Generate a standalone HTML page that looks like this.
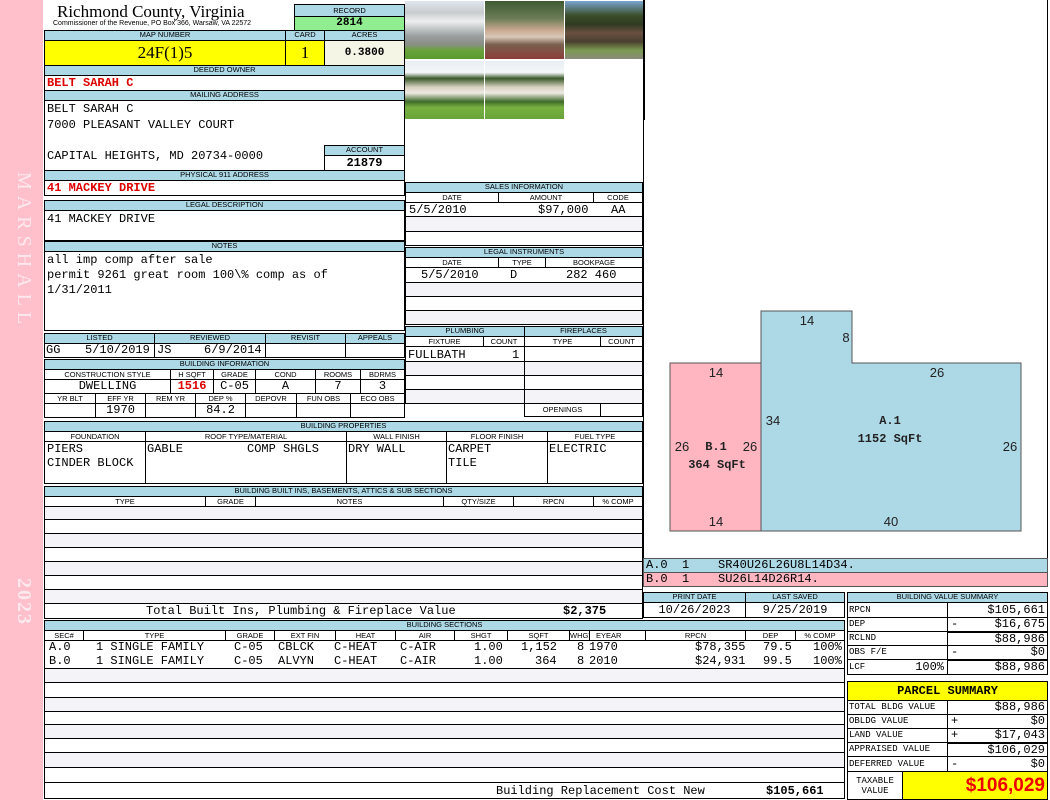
<!DOCTYPE html>
<html><head><meta charset="utf-8"><style>
body{margin:0;width:1050px;height:800px;background:#fff;position:relative;overflow:hidden;font-family:"Liberation Sans",sans-serif}
.a{position:absolute;box-sizing:border-box}
.h{position:absolute;box-sizing:border-box;background:#add8e6;border:1px solid #000;font:7.5px "Liberation Sans",sans-serif;text-align:center;line-height:8px;color:#000;white-space:nowrap;overflow:hidden}
.c{position:absolute;box-sizing:border-box;border:1px solid #000;font:7.5px "Liberation Sans",sans-serif;text-align:center;line-height:9px;white-space:nowrap;overflow:hidden;background:#fff}
.m{font-family:"Liberation Mono",monospace;font-size:12px;white-space:pre;line-height:14px}
.r{position:absolute;box-sizing:border-box;border:1px solid #000;}
.r span{position:absolute;top:0}
.g{background:#f3f3f8}
.red{color:#d00;font-weight:bold}
.ph{position:absolute;overflow:hidden}
</style></head><body>
<div class="a" style="left:0;top:0;width:43px;height:800px;background:#ffc0cb"></div>
<div class="a" style="left:9px;top:172px;width:26px;height:165px;"><div style="transform:rotate(90deg);transform-origin:0 0;position:absolute;left:26px;top:0;width:170px;font:20px 'Liberation Serif',serif;color:#fde8ee;letter-spacing:6px;white-space:nowrap">MARSHALL</div></div>
<div class="a" style="left:9px;top:578px;width:26px;height:50px;"><div style="transform:rotate(90deg);transform-origin:0 0;position:absolute;left:26px;top:0;width:60px;font:bold 20px 'Liberation Serif',serif;color:#fde8ee;letter-spacing:2px">2023</div></div>

<div class="a" style="left:57px;top:2px;font:17px 'Liberation Serif',serif;line-height:20px">Richmond County, Virginia</div>
<div class="a" style="left:53px;top:20px;font:7px 'Liberation Sans',sans-serif;white-space:nowrap">Commissioner of the Revenue, PO Box 366, Warsaw, VA 22572</div>
<div class="h" style="left:294px;top:4px;width:111px;height:13px;line-height:11px">RECORD</div>
<div class="c m" style="left:294px;top:16px;width:111px;height:15px;background:#90ee90;font-weight:bold;line-height:13px;font-size:11px">2814</div>

<div class="h" style="left:44px;top:30px;width:242px;height:11px">MAP NUMBER</div>
<div class="h" style="left:285px;top:30px;width:40px;height:11px">CARD</div>
<div class="h" style="left:324px;top:30px;width:81px;height:11px">ACRES</div>
<div class="c" style="left:44px;top:40px;width:242px;height:26px;background:#ffff00;font:17px 'Liberation Serif',serif;line-height:24px">24F(1)5</div>
<div class="c" style="left:285px;top:40px;width:40px;height:26px;background:#ffff00;font:17px 'Liberation Serif',serif;line-height:24px">1</div>
<div class="c m" style="left:324px;top:40px;width:81px;height:26px;background:#f5f5e6;font-weight:bold;line-height:24px;font-size:11px">0.3800</div>

<div class="h" style="left:44px;top:65px;width:361px;height:11px">DEEDED OWNER</div>
<div class="r m red" style="left:44px;top:75px;width:361px;height:16px;padding-left:2px;line-height:15px">BELT SARAH C</div>
<div class="h" style="left:44px;top:90px;width:361px;height:11px">MAILING ADDRESS</div>
<div class="r m" style="left:44px;top:100px;width:361px;height:71px;padding:1px 0 0 2px;line-height:15.5px">BELT SARAH C
7000 PLEASANT VALLEY COURT

CAPITAL HEIGHTS, MD 20734-0000</div>
<div class="h" style="left:324px;top:145px;width:81px;height:11px">ACCOUNT</div>
<div class="c m" style="left:324px;top:155px;width:81px;height:16px;font-weight:bold;line-height:14px">21879</div>
<div class="h" style="left:44px;top:170px;width:361px;height:11px">PHYSICAL 911 ADDRESS</div>
<div class="r m red" style="left:44px;top:180px;width:361px;height:16px;padding-left:2px;line-height:15px">41 MACKEY DRIVE</div>

<div class="h" style="left:44px;top:200px;width:361px;height:11px">LEGAL DESCRIPTION</div>
<div class="r m" style="left:44px;top:210px;width:361px;height:31px;padding:1px 0 0 2px">41 MACKEY DRIVE</div>
<div class="h" style="left:44px;top:241px;width:361px;height:11px">NOTES</div>
<div class="r m" style="left:44px;top:251px;width:361px;height:80px;padding:1px 0 0 2px;line-height:15px">all imp comp after sale
permit 9261 great room 100\% comp as of
1/31/2011</div>

<div class="h" style="left:44px;top:333px;width:111px;height:11px">LISTED</div>
<div class="h" style="left:154px;top:333px;width:112px;height:11px">REVIEWED</div>
<div class="h" style="left:265px;top:333px;width:81px;height:11px">REVISIT</div>
<div class="h" style="left:345px;top:333px;width:60px;height:11px">APPEALS</div>
<div class="r m" style="left:44px;top:343px;width:111px;height:15px;line-height:13px"><span style="left:1px">GG</span><span style="left:40px">5/10/2019</span></div>
<div class="r m" style="left:154px;top:343px;width:112px;height:15px;line-height:13px"><span style="left:2px">JS</span><span style="left:49px">6/9/2014</span></div>
<div class="r" style="left:265px;top:343px;width:81px;height:15px"></div>
<div class="r" style="left:345px;top:343px;width:60px;height:15px"></div>

<div class="h" style="left:44px;top:359px;width:361px;height:11px">BUILDING INFORMATION</div>
<div class="c" style="left:44px;top:369px;width:127px;height:11px">CONSTRUCTION STYLE</div>
<div class="c" style="left:170px;top:369px;width:44px;height:11px">H SQFT</div>
<div class="c" style="left:213px;top:369px;width:43px;height:11px">GRADE</div>
<div class="c" style="left:255px;top:369px;width:61px;height:11px">COND</div>
<div class="c" style="left:315px;top:369px;width:46px;height:11px">ROOMS</div>
<div class="c" style="left:360px;top:369px;width:45px;height:11px">BDRMS</div>
<div class="c m" style="left:44px;top:379px;width:127px;height:15px;line-height:13px">DWELLING</div>
<div class="c m red" style="left:170px;top:379px;width:44px;height:15px;line-height:13px">1516</div>
<div class="c m" style="left:213px;top:379px;width:43px;height:15px;line-height:13px">C-05</div>
<div class="c m" style="left:255px;top:379px;width:61px;height:15px;line-height:13px">A</div>
<div class="c m" style="left:315px;top:379px;width:46px;height:15px;line-height:13px">7</div>
<div class="c m" style="left:360px;top:379px;width:45px;height:15px;line-height:13px">3</div>
<div class="c" style="left:44px;top:393px;width:52px;height:11px">YR BLT</div>
<div class="c" style="left:95px;top:393px;width:51px;height:11px">EFF YR</div>
<div class="c" style="left:145px;top:393px;width:51px;height:11px">REM YR</div>
<div class="c" style="left:195px;top:393px;width:51px;height:11px">DEP %</div>
<div class="c" style="left:245px;top:393px;width:52px;height:11px">DEPOVR</div>
<div class="c" style="left:296px;top:393px;width:55px;height:11px">FUN OBS</div>
<div class="c" style="left:350px;top:393px;width:55px;height:11px">ECO OBS</div>
<div class="c" style="left:44px;top:403px;width:52px;height:15px"></div>
<div class="c m" style="left:95px;top:403px;width:51px;height:15px;line-height:13px">1970</div>
<div class="c" style="left:145px;top:403px;width:51px;height:15px"></div>
<div class="c m" style="left:195px;top:403px;width:51px;height:15px;line-height:13px">84.2</div>
<div class="c" style="left:245px;top:403px;width:52px;height:15px"></div>
<div class="c" style="left:296px;top:403px;width:55px;height:15px"></div>
<div class="c" style="left:350px;top:403px;width:55px;height:15px"></div>

<div class="h" style="left:44px;top:421px;width:599px;height:11px">BUILDING PROPERTIES</div>
<div class="c" style="left:44px;top:431px;width:102px;height:11px">FOUNDATION</div>
<div class="c" style="left:145px;top:431px;width:202px;height:11px">ROOF TYPE/MATERIAL</div>
<div class="c" style="left:346px;top:431px;width:101px;height:11px">WALL FINISH</div>
<div class="c" style="left:446px;top:431px;width:102px;height:11px">FLOOR FINISH</div>
<div class="c" style="left:547px;top:431px;width:96px;height:11px">FUEL TYPE</div>
<div class="r m" style="left:44px;top:441px;width:102px;height:43px;padding-left:2px">PIERS
CINDER BLOCK</div>
<div class="r m" style="left:145px;top:441px;width:202px;height:43px"><span style="left:1px">GABLE</span><span style="left:101px">COMP SHGLS</span></div>
<div class="r m" style="left:346px;top:441px;width:101px;height:43px;padding-left:1px">DRY WALL</div>
<div class="r m" style="left:446px;top:441px;width:102px;height:43px;padding-left:1px">CARPET
TILE</div>
<div class="r m" style="left:547px;top:441px;width:96px;height:43px;padding-left:1px">ELECTRIC</div>

<div class="h" style="left:44px;top:486px;width:599px;height:11px">BUILDING BUILT INS, BASEMENTS, ATTICS &amp; SUB SECTIONS</div>
<div class="c" style="left:44px;top:496px;width:162px;height:11px">TYPE</div>
<div class="c" style="left:205px;top:496px;width:51px;height:11px">GRADE</div>
<div class="c" style="left:255px;top:496px;width:189px;height:11px">NOTES</div>
<div class="c" style="left:443px;top:496px;width:71px;height:11px">QTY/SIZE</div>
<div class="c" style="left:513px;top:496px;width:81px;height:11px">RPCN</div>
<div class="c" style="left:593px;top:496px;width:50px;height:11px">% COMP</div>
<div class="r g" style="left:44px;top:506px;width:599px;height:14px"></div>
<div class="r" style="left:44px;top:519px;width:599px;height:15px"></div>
<div class="r g" style="left:44px;top:533px;width:599px;height:15px"></div>
<div class="r" style="left:44px;top:547px;width:599px;height:15px"></div>
<div class="r g" style="left:44px;top:561px;width:599px;height:15px"></div>
<div class="r" style="left:44px;top:575px;width:599px;height:15px"></div>
<div class="r g" style="left:44px;top:589px;width:599px;height:15px"></div>
<div class="r m" style="left:44px;top:603px;width:599px;height:16px;line-height:15px"><span style="left:101px">Total Built Ins, Plumbing &amp; Fireplace Value</span><span style="left:518px;font-weight:bold">$2,375</span></div>

<div class="h" style="left:44px;top:620px;width:801px;height:11px">BUILDING SECTIONS</div>
<div class="c" style="left:44px;top:630px;width:40px;height:11px">SEC#</div>
<div class="c" style="left:83px;top:630px;width:143px;height:11px">TYPE</div>
<div class="c" style="left:225px;top:630px;width:50px;height:11px">GRADE</div>
<div class="c" style="left:274px;top:630px;width:62px;height:11px">EXT FIN</div>
<div class="c" style="left:335px;top:630px;width:61px;height:11px">HEAT</div>
<div class="c" style="left:395px;top:630px;width:60px;height:11px">AIR</div>
<div class="c" style="left:454px;top:630px;width:54px;height:11px">SHGT</div>
<div class="c" style="left:507px;top:630px;width:63px;height:11px">SQFT</div>
<div class="c" style="left:569px;top:630px;width:21px;height:11px">WHGT</div>
<div class="c" style="left:589px;top:630px;width:57px;height:11px;text-align:left;padding-left:6px">EYEAR</div>
<div class="c" style="left:645px;top:630px;width:101px;height:11px">RPCN</div>
<div class="c" style="left:745px;top:630px;width:51px;height:11px">DEP</div>
<div class="c" style="left:795px;top:630px;width:50px;height:11px">% COMP</div>
<div class="r m" style="left:44px;top:640px;width:801px;height:15px;line-height:15px;border-width:0 1px"><span style="left:4px">A.0</span><span style="left:51px">1 SINGLE FAMILY</span><span style="left:189px">C-05</span><span style="left:233px">CBLCK</span><span style="left:289px">C-HEAT</span><span style="left:355px">C-AIR</span><span style="left:429px">1.00</span><span style="left:476px">1,152</span><span style="left:532px">8</span><span style="left:544px">1970</span><span style="left:650px">$78,355</span><span style="left:718px">79.5</span><span style="left:768px">100%</span></div>
<div class="r m" style="left:44px;top:654px;width:801px;height:15px;line-height:15px;border-width:0 1px"><span style="left:4px">B.0</span><span style="left:51px">1 SINGLE FAMILY</span><span style="left:189px">C-05</span><span style="left:233px">ALVYN</span><span style="left:289px">C-HEAT</span><span style="left:355px">C-AIR</span><span style="left:429px">1.00</span><span style="left:490px">364</span><span style="left:532px">8</span><span style="left:544px">2010</span><span style="left:650px">$24,931</span><span style="left:718px">99.5</span><span style="left:768px">100%</span></div>
<div class="r g" style="left:44px;top:668px;width:801px;height:15px"></div>
<div class="r" style="left:44px;top:682px;width:801px;height:16px"></div>
<div class="r g" style="left:44px;top:697px;width:801px;height:15px"></div>
<div class="r" style="left:44px;top:711px;width:801px;height:14px"></div>
<div class="r g" style="left:44px;top:724px;width:801px;height:15px"></div>
<div class="r" style="left:44px;top:738px;width:801px;height:15px"></div>
<div class="r g" style="left:44px;top:752px;width:801px;height:16px"></div>
<div class="r" style="left:44px;top:767px;width:801px;height:16px"></div>
<div class="r m" style="left:44px;top:782px;width:801px;height:17px;line-height:17px"><span style="left:451px">Building Replacement Cost New</span><span style="left:721px;font-weight:bold">$105,661</span></div>

<div class="ph" style="left:405px;top:1px;width:79px;height:58px;background:linear-gradient(#dfe6ee 0%,#c9ccce 20%,#eef0f0 35%,#9aa0a0 60%,#8a8e86 75%,#69a33a 85%,#5b9a2f 100%)"></div>
<div class="ph" style="left:485px;top:1px;width:79px;height:58px;background:linear-gradient(#3f5a32 0%,#6b7d58 30%,#c9a88e 50%,#d8c8b8 62%,#7a6050 75%,#8c3e3a 100%)"></div>
<div class="ph" style="left:565px;top:1px;width:79px;height:58px;background:linear-gradient(#7aa6cf 0%,#3b4d2a 25%,#2f3a22 40%,#6a5040 55%,#4a4030 70%,#7a9a50 85%,#8a8a7a 100%)"></div>
<div class="ph" style="left:405px;top:61px;width:79px;height:58px;background:linear-gradient(#e8eef4 0%,#f4f6f8 20%,#3a5a2a 30%,#d6d0c0 45%,#eeeae2 55%,#3f6a2a 70%,#78b040 80%,#6aa53a 100%)"></div>
<div class="ph" style="left:485px;top:61px;width:79px;height:58px;background:linear-gradient(#e8eef4 0%,#f4f6f8 20%,#3a5a2a 30%,#d6d0c0 45%,#eeeae2 55%,#3f6a2a 70%,#78b040 80%,#6aa53a 100%)"></div>
<div class="a" style="left:644px;top:0;width:1px;height:120px;background:#000"></div>

<div class="h" style="left:405px;top:182px;width:238px;height:11px">SALES INFORMATION</div>
<div class="c" style="left:405px;top:192px;width:94px;height:11px">DATE</div>
<div class="c" style="left:498px;top:192px;width:96px;height:11px">AMOUNT</div>
<div class="c" style="left:593px;top:192px;width:50px;height:11px">CODE</div>
<div class="r m" style="left:405px;top:202px;width:238px;height:15px;line-height:16px;border-width:0 1px"><span style="left:3px">5/5/2010</span><span style="left:132px">$97,000</span><span style="left:205px">AA</span></div>
<div class="r g" style="left:405px;top:216px;width:238px;height:16px"></div>
<div class="r" style="left:405px;top:231px;width:238px;height:15px"></div>
<div class="h" style="left:405px;top:247px;width:238px;height:11px">LEGAL INSTRUMENTS</div>
<div class="c" style="left:405px;top:257px;width:94px;height:11px">DATE</div>
<div class="c" style="left:498px;top:257px;width:48px;height:11px">TYPE</div>
<div class="c" style="left:545px;top:257px;width:98px;height:11px">BOOKPAGE</div>
<div class="r m" style="left:405px;top:267px;width:238px;height:16px;line-height:17px;border-width:0 1px"><span style="left:15px">5/5/2010</span><span style="left:104px">D</span><span style="left:160px">282 460</span></div>
<div class="r g" style="left:405px;top:282px;width:238px;height:15px"></div>
<div class="r" style="left:405px;top:296px;width:238px;height:15px"></div>
<div class="r g" style="left:405px;top:310px;width:238px;height:15px"></div>

<div class="h" style="left:405px;top:326px;width:120px;height:11px">PLUMBING</div>
<div class="h" style="left:524px;top:326px;width:119px;height:11px">FIREPLACES</div>
<div class="c" style="left:405px;top:336px;width:79px;height:11px">FIXTURE</div>
<div class="c" style="left:483px;top:336px;width:42px;height:11px">COUNT</div>
<div class="c" style="left:524px;top:336px;width:77px;height:11px">TYPE</div>
<div class="c" style="left:600px;top:336px;width:43px;height:11px">COUNT</div>
<div class="r m" style="left:405px;top:346px;width:120px;height:16px;line-height:16px"><span style="left:2px">FULLBATH</span><span style="left:106px">1</span></div>
<div class="r g" style="left:405px;top:361px;width:120px;height:15px"></div>
<div class="r" style="left:405px;top:375px;width:120px;height:15px"></div>
<div class="r g" style="left:405px;top:389px;width:120px;height:15px"></div>
<div class="r" style="left:524px;top:346px;width:119px;height:16px"></div>
<div class="r g" style="left:524px;top:361px;width:119px;height:15px"></div>
<div class="r" style="left:524px;top:375px;width:119px;height:15px"></div>
<div class="r g" style="left:524px;top:389px;width:119px;height:15px"></div>
<div class="c" style="left:524px;top:403px;width:77px;height:14px;line-height:12px">OPENINGS</div>
<div class="c" style="left:600px;top:403px;width:43px;height:14px"></div>

<div class="r" style="left:643px;top:0;width:405px;height:559px;border-width:0 1px 1px 1px"></div>
<svg class="a" style="left:0;top:0" width="1050" height="560">
<rect x="670" y="363" width="91" height="168" fill="#ffb6c1" stroke="#555" stroke-width="1"/>
<polygon points="761,311 852,311 852,363 1021,363 1021,531 761,531" fill="#add8e6" stroke="#555" stroke-width="1"/>
<g font-family="Liberation Sans,sans-serif" font-size="13" fill="#222" text-anchor="middle">
<text x="807" y="325">14</text><text x="846" y="342">8</text><text x="937" y="377">26</text>
<text x="716" y="377">14</text><text x="773" y="425">34</text><text x="682" y="451">26</text>
<text x="750" y="451">26</text><text x="1010" y="451">26</text><text x="716" y="526">14</text><text x="891" y="526">40</text>
</g>
<g font-family="Liberation Mono,monospace" font-size="12" font-weight="bold" fill="#222" text-anchor="middle">
<text x="716" y="450">B.1</text><text x="717" y="468">364 SqFt</text>
<text x="890" y="424">A.1</text><text x="890" y="442">1152 SqFt</text>
</g>
</svg>
<div class="a m" style="left:643px;top:558px;width:405px;height:15px;background:#add8e6;border:1px solid #555;line-height:13px;padding-left:2px">A.0  1    SR40U26L26U8L14D34.</div>
<div class="a m" style="left:643px;top:572px;width:405px;height:15px;background:#ffb6c1;border:1px solid #555;line-height:13px;padding-left:2px">B.0  1    SU26L14D26R14.</div>

<div class="h" style="left:643px;top:592px;width:103px;height:11px">PRINT DATE</div>
<div class="h" style="left:745px;top:592px;width:100px;height:11px">LAST SAVED</div>
<div class="c m" style="left:643px;top:602px;width:103px;height:16px;line-height:14px">10/26/2023</div>
<div class="c m" style="left:745px;top:602px;width:100px;height:16px;line-height:14px">9/25/2019</div>

<div class="h" style="left:847px;top:592px;width:201px;height:11px">BUILDING VALUE SUMMARY</div>
<div class="r m" style="left:847px;top:602px;width:101px;height:16px;font-size:9px;line-height:14px;padding-left:1px">RPCN</div>
<div class="r m" style="left:947px;top:602px;width:101px;height:16px;text-align:right;padding-right:2px;line-height:14px">$105,661</div>
<div class="r m" style="left:847px;top:617px;width:101px;height:15px;font-size:9px;line-height:13px;padding-left:1px">DEP</div>
<div class="r m" style="left:947px;top:617px;width:101px;height:15px;text-align:right;padding-right:2px;line-height:13px"><span style="left:3px">-</span>$16,675</div>
<div class="r m" style="left:847px;top:631px;width:101px;height:15px;font-size:9px;line-height:13px;padding-left:1px">RCLND</div>
<div class="r m" style="left:947px;top:631px;width:101px;height:15px;text-align:right;padding-right:2px;line-height:12px;border-top-width:2px">$88,986</div>
<div class="r m" style="left:847px;top:645px;width:101px;height:15px;font-size:9px;line-height:13px;padding-left:1px">OBS F/E</div>
<div class="r m" style="left:947px;top:645px;width:101px;height:15px;text-align:right;padding-right:2px;line-height:13px"><span style="left:3px">-</span>$0</div>
<div class="r m" style="left:847px;top:659px;width:101px;height:16px;font-size:9px;line-height:14px;padding-left:1px">LCF<span style="right:3px;left:auto;font-size:12px">100%</span></div>
<div class="r m" style="left:947px;top:659px;width:101px;height:16px;text-align:right;padding-right:2px;line-height:13px;border-top-width:2px">$88,986</div>

<div class="r" style="left:847px;top:681px;width:201px;height:20px;background:#ffff00;font:bold 12px 'Liberation Mono',monospace;text-align:center;line-height:18px">PARCEL SUMMARY</div>
<div class="r m" style="left:847px;top:700px;width:101px;height:15px;font-size:9px;line-height:13px;padding-left:1px">TOTAL BLDG VALUE</div>
<div class="r m" style="left:947px;top:700px;width:101px;height:15px;text-align:right;padding-right:2px;line-height:13px">$88,986</div>
<div class="r m" style="left:847px;top:714px;width:101px;height:15px;font-size:9px;line-height:13px;padding-left:1px">OBLDG VALUE</div>
<div class="r m" style="left:947px;top:714px;width:101px;height:15px;text-align:right;padding-right:2px;line-height:13px"><span style="left:3px">+</span>$0</div>
<div class="r m" style="left:847px;top:728px;width:101px;height:15px;font-size:9px;line-height:13px;padding-left:1px">LAND VALUE</div>
<div class="r m" style="left:947px;top:728px;width:101px;height:15px;text-align:right;padding-right:2px;line-height:13px"><span style="left:3px">+</span>$17,043</div>
<div class="r m" style="left:847px;top:742px;width:101px;height:15px;font-size:9px;line-height:13px;padding-left:1px">APPRAISED VALUE</div>
<div class="r m" style="left:947px;top:742px;width:101px;height:15px;text-align:right;padding-right:2px;line-height:12px;border-top-width:2px">$106,029</div>
<div class="r m" style="left:847px;top:756px;width:101px;height:16px;font-size:9px;line-height:14px;padding-left:1px">DEFERRED VALUE</div>
<div class="r m" style="left:947px;top:756px;width:101px;height:16px;text-align:right;padding-right:2px;line-height:14px"><span style="left:3px">-</span>$0</div>
<div class="r m" style="left:847px;top:771px;width:56px;height:29px;font-size:9px;line-height:10px;text-align:center;padding-top:4px">TAXABLE
VALUE</div>
<div class="r" style="left:902px;top:771px;width:146px;height:29px;background:#ffff00;color:#e00;font:bold 19px 'Liberation Sans',sans-serif;text-align:right;padding-right:2px;line-height:27px">$106,029</div>
</body></html>
